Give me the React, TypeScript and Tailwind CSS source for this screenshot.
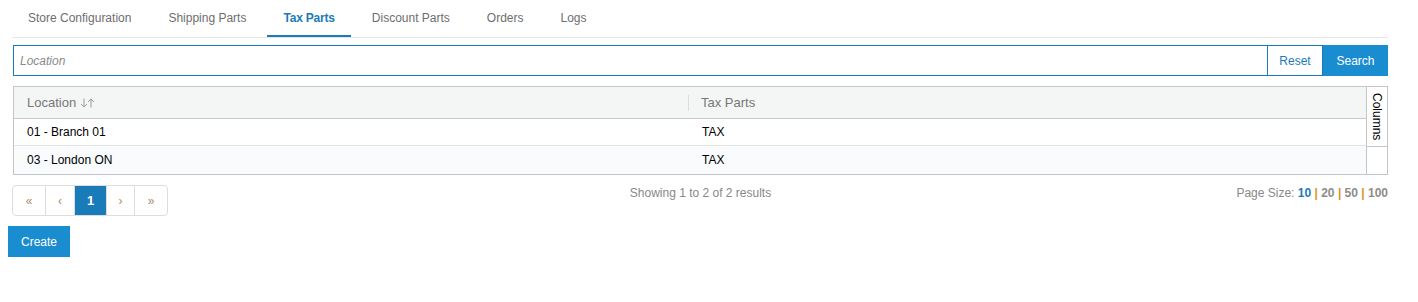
const tabs = ["Store Configuration", "Shipping Parts", "Tax Parts", "Discount Parts", "Orders", "Logs"];

const rows = [
  { location: "01 - Branch 01", parts: "TAX" },
  { location: "03 - London ON", parts: "TAX" },
];

const pages = [
  { label: "«", w: "w-[32px]" },
  { label: "‹", w: "w-[29px]" },
  { label: "1", w: "w-[32px]", active: true },
  { label: "›", w: "w-[28px]" },
  { label: "»", w: "w-[33px]" },
];

const sizes = ["10", "20", "50", "100"];

function SortIcon() {
  return (
    <svg width="15" height="10" viewBox="0 0 15 10" className="inline-block ml-[4px] align-[-1px]" fill="none" stroke="#9a9a9a" strokeWidth="1">
      <path d="M4 0.5V9M1 6l3 3 3-3" />
      <path d="M11 1v8.5M8 4l3-3 3 3" />
    </svg>
  );
}

export default function App() {
  return (
    <div className="w-[1418px] h-[302px] bg-white pl-[8px] text-[12px] text-black font-['Liberation_Sans',Arial,sans-serif]">
      <div className="ml-[5px] w-[1375px]">
        {/* tabs */}
        <div className="flex gap-[5px] border-b border-[#e6e6e6] -ml-px">
          {tabs.map((t) => (
            <div
              key={t}
              className={
                t === "Tax Parts"
                  ? "h-[37px] pt-px px-[16px] flex items-center border-b-2 border-[#1a7bb9] text-[#1a7bb9] font-bold tracking-[-0.2px]"
                  : "h-[37px] pt-px px-[16px] flex items-center border-b-2 border-transparent text-[#6e6e6e]"
              }
            >
              {t}
            </div>
          ))}
        </div>

        {/* search */}
        <div className="mt-[7px] flex h-[31px]">
          <div className="flex-1 border-y border-l border-[#1a7bb9] flex items-center pl-[6px] italic text-[#8a8a8a]">
            Location
          </div>
          <button className="w-[56px] border border-[#1a7bb9] text-[#1a7bb9]">Reset</button>
          <button className="w-[65px] bg-[#1a8dd0] text-white">Search</button>
        </div>

        {/* table */}
        <div className="mt-[10px] flex">
          <div className="flex-1 border border-[#c3c6c9]">
            <div className="h-[32px] flex items-center bg-[#f4f5f5] border-b border-[#c8cbce] text-[13px] text-[#777]">
              <div className="w-[675px] h-full flex items-center justify-between pl-[13px]">
                <span className="flex items-center">
                  Location
                  <SortIcon />
                </span>
                <span className="w-px h-[16px] bg-[#dcdcdc]" />
              </div>
              <div className="pl-[12px]">Tax Parts</div>
            </div>
            {rows.map((r, i) => (
              <div
                key={r.location}
                className={
                  i === 0
                    ? "h-[27px] flex items-center border-b border-[#e2e4e6] bg-white"
                    : "h-[28px] flex items-center bg-[#f9fbfd]"
                }
              >
                <div className="w-[675px] pl-[13px]">{r.location}</div>
                <div className="pl-[13px]">{r.parts}</div>
              </div>
            ))}
          </div>
          <div className="w-[22px] -ml-px border border-[#c3c6c9] flex flex-col">
            <div className="h-[60px] border-b border-[#c3c6c9] flex items-center justify-center">
              <span className="[writing-mode:vertical-rl] leading-[14px]">Columns</span>
            </div>
            <div className="flex-1" />
          </div>
        </div>

        {/* footer */}
        <div className="mt-[10px] grid grid-cols-3 items-start">
          <div className="flex -ml-px">
            <div className="flex h-[31px] border border-[#dddddd] rounded-[4px] overflow-hidden">
              {pages.map((p, i) => (
                <div
                  key={i}
                  className={
                    (p.active
                      ? "bg-[#1a7bb9] text-white font-bold text-[13px] "
                      : "text-[#b08a62] text-[12px] ") +
                    (i > 0 ? "border-l border-[#dddddd] " : "") +
                    p.w +
                    " flex items-center justify-center"
                  }
                >
                  {p.label}
                </div>
              ))}
            </div>
          </div>
          <div className="text-center leading-[16px] text-[#888]">Showing 1 to 2 of 2 results</div>
          <div className="text-right leading-[16px] text-[#888]">
            Page Size:{" "}
            {sizes.map((s, i) => (
              <span key={s}>
                {i > 0 && <span className="text-[#e0921c] font-bold"> | </span>}
                <span className={i === 0 ? "font-bold text-[#1a7bb9]" : "font-bold text-[#8c8c8c]"}>{s}</span>
              </span>
            ))}
          </div>
        </div>
      </div>

      <button className="mt-[10px] w-[62px] h-[31px] bg-[#1a8dd0] text-white">Create</button>
    </div>
  );
}
